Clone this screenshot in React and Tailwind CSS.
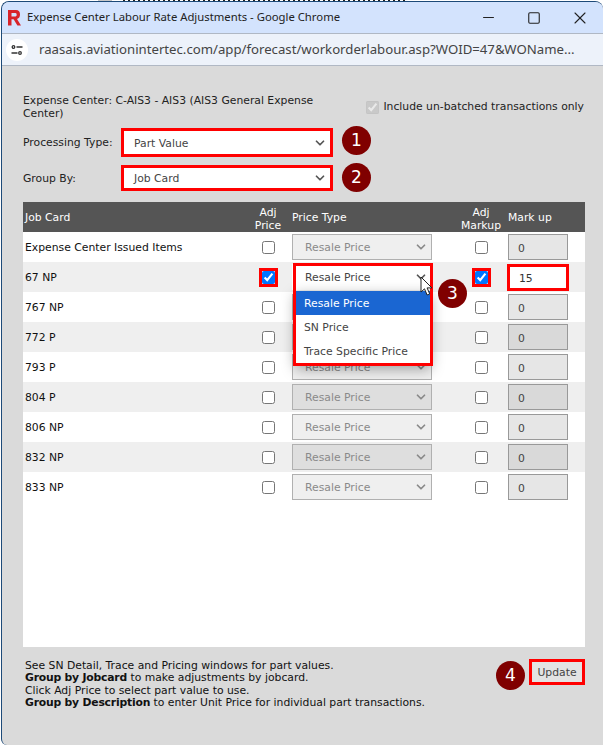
import { ChevronDown, Minus, Square, X } from "lucide-react";

const rows = ["Expense Center Issued Items", "67 NP", "767 NP", "772 P", "793 P", "804 P", "806 NP", "832 NP", "833 NP"];

const Badge = ({ n, className }) => (
  <span className={`absolute w-[29px] h-[29px] rounded-full bg-[#800000] text-white text-[17px] flex items-center justify-center ${className}`}>
    {n}
  </span>
);

const Select = ({ label, disabled, className = "" }) => (
  <div
    className={`flex items-center justify-between h-[26px] w-[140px] pl-[12px] pr-[3px] border ${
      disabled ? "border-[#b0b0b0] text-[#8a8a8a]" : "border-transparent bg-white text-[#444]"
    } ${className}`}
  >
    <span className="pt-[3px]">{label}</span>
    <ChevronDown size={14} strokeWidth={3} className={disabled ? "text-[#8a8a8a]" : "text-[#555]"} />
  </div>
);

const Check = ({ checked }) => (
  <input
    type="checkbox"
    readOnly
    checked={!!checked}
    className={`w-[13px] h-[13px] m-0 accent-[#0075ff] ${checked ? "outline-[3px] outline-[#f00]" : ""}`}
  />
);

const Row = ({ name, index }) => {
  const active = index === 1;
  const odd = index % 2 === 1;
  // the open dropdown sits over these two rows' selects
  const covered = index === 2 || index === 3;
  return (
    <div className={`relative grid grid-cols-[222px_46px_170px_40px_84px] items-center h-[30px] ${odd ? "bg-[#efefef]" : "bg-white"}`}>
      <span className="pl-[2px] pt-[3px] text-[#111]">{name}</span>
      <span className="flex justify-center"><Check checked={active} /></span>
      <span className="pl-[1px]">
        <Select label={covered ? "" : "Resale Price"} disabled={!active} className={active ? "" : odd ? "bg-[#dedede]" : "bg-[#efefef]"} />
      </span>
      <span className="flex justify-center"><Check checked={active} /></span>
      <span className={active ? "pl-[6px]" : "pl-[7px]"}>
        {active ? (
          <input readOnly value="15" className="w-[62px] h-[27px] pl-[9px] pt-[2px] bg-white border-[3px] border-[#f00] outline-none text-[#333]" />
        ) : (
          <input readOnly value="0" className={`w-[60px] h-[26px] pl-[9px] pt-[2px] border border-[#999] outline-none text-[#444] ${odd ? "bg-[#d9d9d9]" : "bg-[#e6e6e6]"}`} />
        )}
      </span>
      {active && (
        <>
          <div className="absolute z-10 left-[270px] top-[1px] w-[140px] h-[103px] border-[3px] border-[#f00] pointer-events-none" />
          <div className="absolute z-[5] left-[272px] top-[29px] w-[136px] h-[74px] bg-white rounded-b-[4px] shadow-[0_4px_14px_rgba(0,0,0,0.35)] text-[#444]">
            <div className="h-[24px] pl-[9px] pt-[3px] flex items-center bg-[#1a66d2] text-white">Resale Price</div>
            <div className="h-[24px] pl-[9px] pt-[3px] flex items-center">SN Price</div>
            <div className="h-[24px] pl-[9px] pt-[3px] flex items-center">Trace Specific Price</div>
          </div>
          <svg className="absolute z-20 left-[397px] top-[14px]" width="14" height="21" viewBox="0 0 14 21">
            <path d="M1 1v15l3.500-3.200 2.600 6.200 2.600-1.100-2.600-6h4.800z" fill="#fff" stroke="#222" strokeWidth="1" />
          </svg>
          <Badge n="3" className="z-20 left-[415px] top-[17px]" />
        </>
      )}
    </div>
  );
};

export default function App() {
  return (
    <div className="relative w-[603px] h-[745px] bg-white overflow-hidden font-['DejaVu_Sans',sans-serif] text-[10.800px]">
      {/* sliver of the page behind the popup window */}
      <div className="absolute left-[98px] top-0 w-[14px] h-[1px] bg-[#c8c8c8]" />
      <div className="absolute left-[123px] top-0 w-[282px] h-[1px] bg-[repeating-linear-gradient(90deg,#222_0_2px,transparent_2px_5px)]" />
      <div className="mt-[1px] ml-[1px] w-[602px] h-[744px] flex flex-col border-l border-t border-[#1d4a78] rounded-t-[8px] rounded-bl-[6px] overflow-hidden bg-[#dadada]">
        {/* title bar */}
        <div className="flex items-center h-[31px] bg-[#d3e3fd] pl-[5px] shrink-0">
          <svg width="14" height="17" viewBox="0 0 14 17">
            <path d="M1 1h8q4 0 4 4.500 0 3.500-3 4.500l4 6.500h-3.600L6.600 10.300H4.500V16.500H1z M4.500 4v3.500H8.500q1.200 0 1.200-1.700T8.500 4z" fill="#d8232a" fillRule="evenodd" />
          </svg>
          <span className="ml-[6px] font-['Noto_Sans',sans-serif] text-[11.300px] text-[#222]">Expense Center Labour Rate Adjustments - Google Chrome</span>
          <div className="ml-auto flex items-center gap-[29px] pr-[13px] text-[#222]">
            <Minus size={17} strokeWidth={1.500} />
            <Square size={14} strokeWidth={1.900} className="ml-[1px]" />
            <X size={20} strokeWidth={1.300} />
          </div>
        </div>
        {/* url bar */}
        <div className="flex items-center h-[33px] bg-[#edf2fa] border-t border-b border-[#b0b8c4] pl-[4px] shrink-0">
          <span className="w-[22px] h-[22px] rounded-full bg-white flex items-center justify-center">
            <svg width="12" height="12" viewBox="0 0 12 12" fill="none" stroke="#333" strokeWidth="1.300">
              <circle cx="2.500" cy="3" r="1.300" />
              <path d="M5.500 3H11.500M.5 9H6.500" />
              <circle cx="9" cy="9" r="1.300" />
            </svg>
          </span>
          <span className="ml-[11px] font-['Noto_Sans',sans-serif] text-[13.200px] text-[#444]">raasais.aviationintertec.com/app/forecast/workorderlabour.asp?WOID=47&amp;WOName...</span>
        </div>
        {/* body */}
        <div className="relative flex-1 pl-[21px] pt-[28px] text-[#222]">
          <div className="flex items-center w-[562px]">
            <p className="w-[320px] leading-[13px]">Expense Center: C-AIS3 - AIS3 (AIS3 General Expense Center)</p>
            <label className="ml-auto mr-[1px] flex items-center gap-[4px]">
              <input type="checkbox" checked readOnly disabled className="w-[13px] h-[13px] m-0" />
              Include un-batched transactions only
            </label>
          </div>
          <div className="relative flex items-center mt-[8px]">
            <span className="w-[98px] pt-[2px]">Processing Type:</span>
            <Select label="Part Value" className="!w-[212px] !h-[29px] !border-[3px] !border-[#f00] !pl-[10px]" />
            <Badge n="1" className="left-[319px] top-[-2px]" />
          </div>
          <div className="relative flex items-center mt-[8px]">
            <span className="w-[98px] pt-[2px]">Group By:</span>
            <Select label="Job Card" className="!w-[212px] !border-[3px] !border-[#f00] !pl-[10px]" />
            <Badge n="2" className="left-[319px] top-[-2px]" />
          </div>
          <div className="mt-[11px] w-[562px] h-[445px] bg-white flex flex-col">
            <div className="grid grid-cols-[222px_46px_170px_40px_84px] items-center h-[30px] pt-[3px] bg-[#555] text-white shrink-0">
              <span className="pl-[2px]">Job Card</span>
              <span className="text-center leading-[13px]">Adj Price</span>
              <span className="pl-[1px]">Price Type</span>
              <span className="text-center leading-[13px]">Adj Markup</span>
              <span className="pl-[7px]">Mark up</span>
            </div>
            {rows.map((name, i) => (
              <Row key={name} name={name} index={i} />
            ))}
          </div>
          <div className="relative flex mt-[13px] pl-[2px]">
            <p className="leading-[12.400px] text-[#111]">
              See SN Detail, Trace and Pricing windows for part values.<br />
              <b className="tracking-[-0.2px]">Group by Jobcard</b> to make adjustments by jobcard.<br />
              Click Adj Price to select part value to use.<br />
              <b className="tracking-[-0.2px]">Group by Description</b> to enter Unit Price for individual part transactions.
            </p>
            <button className="absolute left-[506px] top-[-1px] w-[56px] h-[26px] pt-[2px] border-[3px] border-[#f00] bg-[#e3e3e3] text-[#444]">Update</button>
            <Badge n="4" className="left-[473px] top-[1px]" />
          </div>
        </div>
      </div>
    </div>
  );
}
